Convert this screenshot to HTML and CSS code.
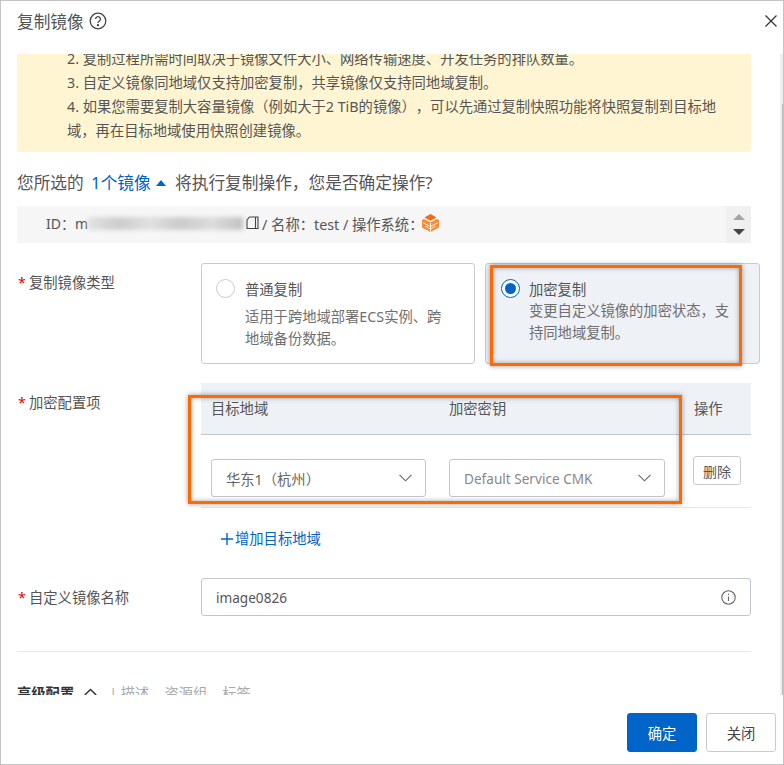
FILE: index.html
```html
<!DOCTYPE html>
<html lang="zh-CN">
<head>
    <meta charset="UTF-8">
    <title>复制镜像</title>
    <link rel="stylesheet" href="styles.css">
</head>
<body>
<div class="dialog">

    <!-- Header -->
    <div class="dialog-head">
        <span class="dialog-title">复制镜像</span>
        <svg class="help-icon" width="18" height="18" viewBox="0 0 18 18" fill="none" stroke="#444" stroke-width="1.3">
            <circle cx="9" cy="9" r="7.8"/>
            <path d="M6.6 7.1a2.4 2.4 0 1 1 3.6 2.1c-.8.5-1.2.9-1.2 1.8"/>
            <circle cx="9" cy="13.2" r=".5" fill="#444"/>
        </svg>
        <svg class="close-icon" width="12" height="12" viewBox="0 0 12 12" fill="none" stroke="#333" stroke-width="1.2">
            <path d="M.5.5l11 11M11.5.5l-11 11"/>
        </svg>
    </div>

    <!-- Body, scrolled a little -->
    <div class="dialog-body">
        <div class="scroll-inner">
            <div class="notice">
                <p>2. 复制过程所需时间取决于镜像文件大小、网络传输速度、开发任务的排队数量。</p>
                <p>3. 自定义镜像同地域仅支持加密复制，共享镜像仅支持同地域复制。</p>
                <p>4. 如果您需要复制大容量镜像（例如大于2 TiB的镜像），可以先通过复制快照功能将快照复制到目标地域，再在目标地域使用快照创建镜像。</p>
            </div>

            <div class="question">
                您所选的 <a class="link">1个镜像</a><span class="caret-up"></span> 将执行复制操作，您是否确定操作?
            </div>

            <div class="image-list">
                <div class="image-row">
                    <span>ID：m</span>
                    <span class="blurred"></span>
                    <svg class="copy-icon" width="13" height="14" viewBox="0 0 13 14" fill="none" stroke="#444" stroke-width="1.1">
                        <path d="M3.500 1h8.500v11.500H1V4z"/>
                        <path d="M9.500 1v11.500"/>
                    </svg>
                    <span class="image-meta">/ 名称：test / 操作系统：</span>
                    <svg class="os-icon" width="17" height="18" viewBox="0 0 17 18">
                        <path d="M8.500 0l6 3.400-6 3.400-6-3.400z" fill="#f26a13"/>
                        <path d="M2 5l6.500 3.600L15 5l2 1.100v7.400L8.500 18 0 13.500V6.100z" fill="#f78a35"/>
                        <path d="M1 8.600l7.500 4 7.500-4M8.500 9v8.500M3.500 12.200l5 2.800 5-2.800" fill="none" stroke="#fff" stroke-width=".9"/>
                    </svg>
                </div>
                <div class="list-scroll">
                    <span class="arrow-up"></span>
                    <span class="arrow-down"></span>
                </div>
            </div>

            <div class="form-row type-row">
                <label class="form-label"><i>*</i>复制镜像类型</label>
                <div class="type-cards">
                    <div class="type-card">
                        <span class="radio"></span>
                        <div>
                            <div class="card-title">普通复制</div>
                            <div class="card-desc">适用于跨地域部署ECS实例、跨地域备份数据。</div>
                        </div>
                    </div>
                    <div class="type-card active">
                        <span class="radio on"></span>
                        <div>
                            <div class="card-title">加密复制</div>
                            <div class="card-desc">变更自定义镜像的加密状态，支持同地域复制。</div>
                        </div>
                    </div>
                </div>
            </div>

            <div class="form-row table-row">
                <label class="form-label"><i>*</i>加密配置项</label>
                <div class="config">
                    <div class="config-head">
                        <span class="col-region">目标地域</span>
                        <span class="col-key">加密密钥</span>
                        <span>操作</span>
                    </div>
                    <div class="config-line">
                        <div class="select col-region-box">
                            <span>华东1（杭州）</span>
                            <svg width="13" height="8" viewBox="0 0 13 8" fill="none" stroke="#666" stroke-width="1.1"><path d="M.5.8l6 6 6-6"/></svg>
                        </div>
                        <div class="select col-key-box muted">
                            <span>Default Service CMK</span>
                            <svg width="13" height="8" viewBox="0 0 13 8" fill="none" stroke="#666" stroke-width="1.1"><path d="M.5.8l6 6 6-6"/></svg>
                        </div>
                        <button class="btn-small">删除</button>
                    </div>
                    <a class="add-region"><svg width="14" height="14" viewBox="0 0 14 14" stroke="#0064c8" stroke-width="1.4"><path d="M7 1v12M1 7h12"/></svg>增加目标地域</a>
                </div>
            </div>

            <div class="form-row name-row">
                <label class="form-label"><i>*</i>自定义镜像名称</label>
                <div class="name-input">
                    <span>image0826</span>
                    <svg width="15" height="15" viewBox="0 0 15 15" fill="none" stroke="#666" stroke-width="1.1">
                        <circle cx="7.500" cy="7.500" r="6.700"/>
                        <path d="M7.500 6.500v4.500M7.500 3.800v1.200"/>
                    </svg>
                </div>
            </div>

            <div class="advanced">
                <b>高级配置</b>
                <svg class="adv-chevron" width="13" height="8" viewBox="0 0 13 8" fill="none" stroke="#333" stroke-width="1.5"><path d="M.8 7l5.700-5.500L12.200 7"/></svg>
                <span class="adv-items">| 描述<em>资源组</em><em>标签</em></span>
            </div>
        </div>
        <div class="body-scrollbar"><div class="body-thumb"></div></div>
    </div>

    <!-- Footer -->
    <div class="dialog-foot">
        <button class="btn primary">确定</button>
        <button class="btn">关闭</button>
    </div>

    <!-- Orange highlights drawn on top of the shot -->
    <div class="mark mark-type"></div>
    <div class="mark mark-config"></div>
</div>
</body>
</html>
```

FILE: styles.css
```css
* { box-sizing: border-box; }
body { margin: 0; background: #fff; font-family: "Noto Sans", "Noto Sans CJK SC", sans-serif; font-size: 14.3px; color: #555; text-spacing-trim: space-all; }

/* Dialog */
.dialog { position: relative; width: 784px; height: 765px; background: #fff; border: 1px solid #c4c4c4; overflow: hidden; display: flex; flex-direction: column; }
.dialog-head { height: 53px; flex-shrink: 0; display: flex; align-items: center; padding: 0 0 13px 16px; }
.dialog-title { font-size: 16.700px; color: #555; }
.help-icon { margin-left: 5px; }
.close-icon { margin-left: auto; margin-right: 6px; }

.dialog-body { height: 641px; flex-shrink: 0; overflow: hidden; position: relative; }
.scroll-inner { width: 734px; margin-left: 16px; }
.body-scrollbar { position: absolute; top: 0; right: 0; width: 3px; height: 100%; background: #efefef; }
.body-thumb { margin: 50px 0 0 auto; width: 1px; height: 591px; background: #bbb; }

/* Notice */
.notice { height: 98px; padding: 0 25px 0 50px; background: #fff5d2; border-radius: 0 0 3px 3px; line-height: 24px; overflow: hidden; }
.notice p { margin: 0; }
.notice p:first-child { margin-top: -7px; }

.question { margin-top: 20px; font-size: 16.700px; line-height: 22px; word-spacing: 3px; }
.link { color: #0064c8; }
.caret-up { display: inline-block; margin: 0 2px 3px 5px; border: 5.500px solid transparent; border-top: 0; border-bottom: 6px solid #0064c8; }

/* Image list */
.image-list { margin-top: 12px; height: 37px; background: #f6f6f6; display: flex; justify-content: space-between; }
.image-row { display: flex; align-items: center; padding: 0 0 3px 29px; font-size: 14px; }
.blurred { width: 155px; height: 13px; background: linear-gradient(90deg, #e2e2e2, #cdcdcd 20%, #e0e0e0 40%, #cbcbcb 60%, #dcdcdc 80%, #c2c2c2); filter: blur(2px); }
.copy-icon { margin-left: 3px; }
.image-meta { margin-left: 3px; font-size: 14.300px; }
.os-icon { margin-left: -1px; }
.list-scroll { width: 25px; background: #f0f0f0; display: flex; flex-direction: column; align-items: center; justify-content: center; gap: 9px; }
.arrow-up { border: 6px solid transparent; border-top: 0; border-bottom: 6px solid #a5a5a5; }
.arrow-down { border: 6px solid transparent; border-bottom: 0; border-top: 6px solid #444; }

/* Form rows */
.form-row { display: flex; }
.form-label { width: 184px; flex-shrink: 0; }
.form-label i { display: inline-block; width: 12px; padding-left: 1px; font-style: normal; color: #d00; }
.type-row { margin-top: 20px; }
.type-row .form-label { padding-top: 8px; }
.type-cards { display: grid; grid-template-columns: 274px 275px; gap: 10px; flex-shrink: 0; }
.type-card { height: 101px; border: 1px solid #c8ccd2; border-radius: 3px; display: flex; gap: 10px; padding: 15px 20px 0 14px; }
.type-card.active { background: #eef1f6; padding-left: 15px; gap: 9px; }
.radio { width: 19px; height: 19px; flex-shrink: 0; border: 1px solid #c8ccd2; border-radius: 50%; background: #fff; position: relative; }
.radio.on { border-color: #0064c8; }
.radio.on::after { content: ""; position: absolute; inset: 3px; background: #0064c8; border-radius: 50%; }
.card-title { line-height: 22px; }
.card-desc { line-height: 21.500px; color: #6f6f6f; margin-top: 5px; }
.active .card-desc { margin-top: -1px; }

/* Config table */
.table-row { margin-top: 19px; }
.table-row .form-label { padding-top: 8px; }
.config { width: 550px; flex-shrink: 0; }
.config-head { height: 52px; background: #eef1f6; border-bottom: 1px solid #c0c6cf; display: flex; align-items: center; padding: 0 0 2px 10px; }
.col-region { width: 238px; }
.col-key { width: 245px; }
.config-line { height: 73px; border-bottom: 1px solid #e8e8e8; display: flex; padding: 24px 0 0 10px; align-items: flex-start; }
.select { height: 38px; border: 1px solid #c0c6cf; border-radius: 3px; display: flex; align-items: center; justify-content: space-between; padding: 0 13px 0 14px; color: #666; }
.col-region-box { width: 215px; }
.col-key-box { width: 216px; margin-left: 23px; }
.muted { color: #888; font-size: 13.600px; }
.btn-small { margin: -3px 0 0 28px; width: 48px; height: 29px; padding: 0; background: #fff; border: 1px solid #c8ccd2; border-radius: 3px; font: inherit; font-size: 14px; color: #555; }
.add-region { display: flex; align-items: center; gap: 1px; margin: 21px 0 0 19px; color: #0064c8; line-height: 20px; }
.name-row { margin-top: 29px; }
.name-row .form-label { line-height: 38px; padding-top: 1px; }
.name-input { width: 550px; height: 38px; flex-shrink: 0; border: 1px solid #c0c6cf; border-radius: 3px; display: flex; align-items: center; justify-content: space-between; padding: 0 14px; font-size: 13.600px; }

/* Advanced, cut off by the body edge */
.advanced { margin-top: 34px; padding-top: 31px; border-top: 1px solid #e9e9e9; display: flex; align-items: center; gap: 10px; line-height: 22px; color: #333; }
.adv-chevron { margin-bottom: 5px; }
.adv-items { color: #aaa; margin-left: 2px; }
.adv-items em { font-style: normal; margin-left: 15px; }

/* Footer */
.dialog-foot { flex: 1; display: flex; justify-content: flex-end; gap: 9px; padding: 18px 7px 0 0; }
.btn { width: 70px; height: 39px; background: #fff; border: 1px solid #c8ccd2; border-radius: 3px; font: inherit; color: #444; }
.btn.primary { background: #0064c8; border-color: #0064c8; color: #fff; }

/* Highlights */
.mark { position: absolute; border: 3px solid #ff6a00; box-shadow: 0 0 5px rgba(0, 0, 0, .4), inset 0 0 5px rgba(0, 0, 0, .35); }
.mark-type { left: 489px; top: 264px; width: 252px; height: 101px; }
.mark-config { left: 187px; top: 394px; width: 494px; height: 109px; }
```
